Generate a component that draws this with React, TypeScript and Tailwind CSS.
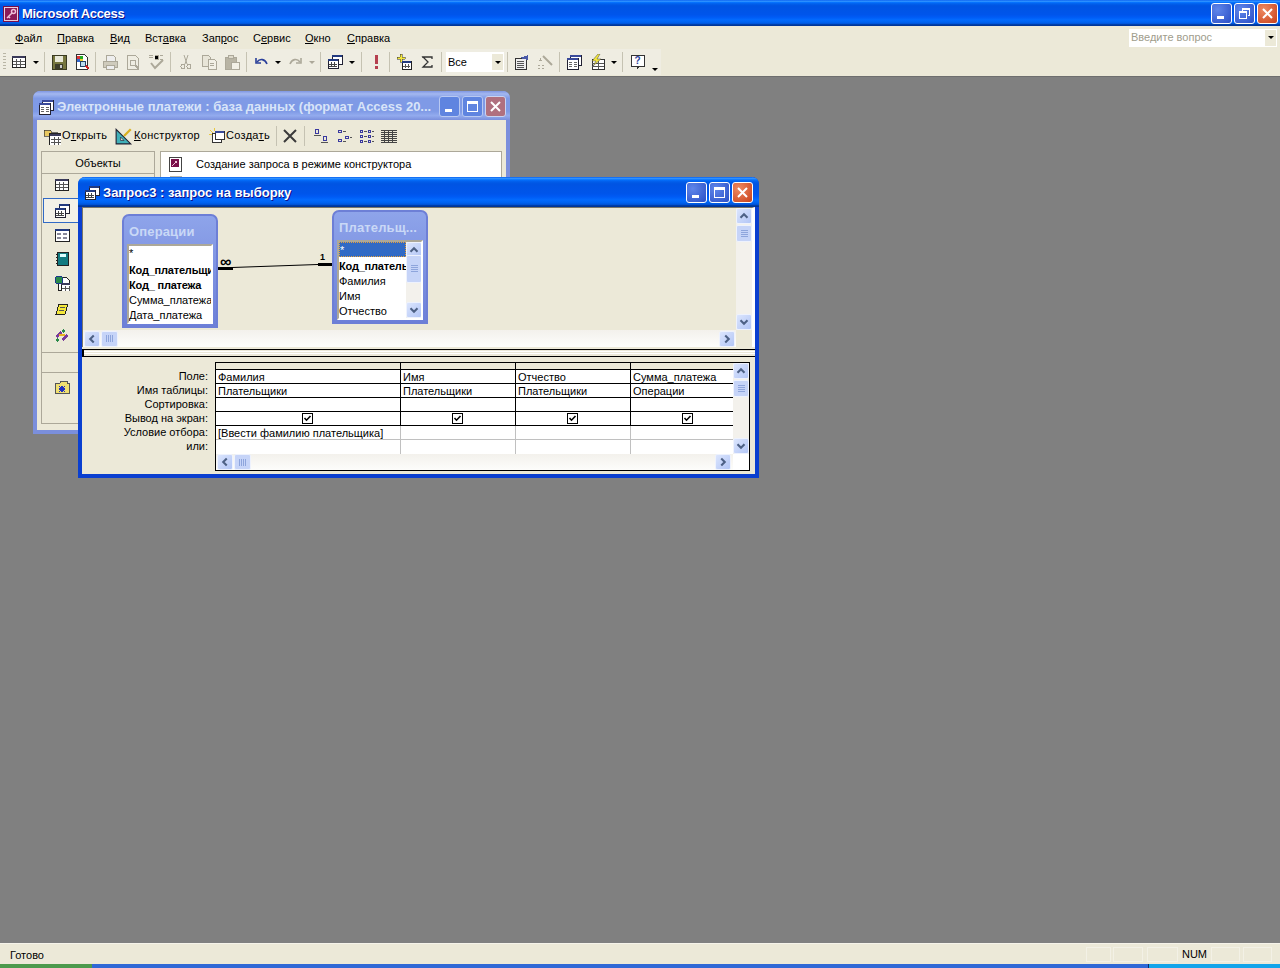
import type { ReactNode } from "react";

const LUNA =
  "bg-[linear-gradient(180deg,#0058ee_0%,#3593ff_4%,#288eff_6%,#127dff_8%,#036ffc_10%,#0262ee_14%,#0057e5_20%,#0054e3_24%,#0055eb_56%,#005bf5_66%,#026afe_76%,#0062ef_86%,#0052d6_92%,#0040ab_94%,#003092_100%)]";

const Ic = ({ children, size = 16 }: { children: ReactNode; size?: number }) => (
  <svg width={size} height={size} viewBox="0 0 16 16" shapeRendering="crispEdges" className="shrink-0">
    {children}
  </svg>
);

const GridIcon = ({ x = 1, y = 2, head = "#3a3a5a" }: { x?: number; y?: number; head?: string }) => (
  <g>
    <rect x={x} y={y} width="13" height="11" fill="#fff" stroke="#222" />
    <rect x={x} y={y} width="13" height="2" fill={head} />
    <path d={`M${x + 4} ${y + 3}v8M${x + 8} ${y + 3}v8M${x + 1} ${y + 5}h12M${x + 1} ${y + 8}h12`} stroke="#555" />
  </g>
);

const QueryIcon = () => (
  <Ic>
    <rect x="5" y="1" width="10" height="9" fill="#fff" stroke="#223" />
    <rect x="5" y="1" width="10" height="2" fill="#223a80" />
    <rect x="1" y="5" width="10" height="9" fill="#fff" stroke="#223" />
    <rect x="1" y="5" width="10" height="2" fill="#223a80" />
    <path d="M4 8v5M7 8v5M2 10h8M2 12h8" stroke="#444" />
  </Ic>
);

const icons: Record<string, ReactNode> = {
  table: <Ic><GridIcon /></Ic>,
  save: (
    <Ic>
      <rect x="1" y="1" width="14" height="14" fill="#76763e" stroke="#3a3a22" />
      <rect x="4" y="2" width="8" height="6" fill="#e8e8d8" />
      <rect x="4" y="10" width="8" height="5" fill="#3c3c2a" />
      <rect x="9" y="11" width="2" height="3" fill="#ccc" />
    </Ic>
  ),
  search: (
    <Ic>
      <path d="M2 0h8l3 3v12H2z" fill="#fff" stroke="#333" />
      <rect x="3" y="2" width="3" height="3" fill="#d33" />
      <rect x="6" y="2" width="3" height="3" fill="#2a2" />
      <rect x="3" y="5" width="3" height="3" fill="#36c" />
      <rect x="6" y="5" width="3" height="3" fill="#ec3" />
      <circle cx="9" cy="10" r="3" fill="#bde" stroke="#246" />
      <path d="M12 12l3 3" stroke="#c22" strokeWidth="2" />
    </Ic>
  ),
  print: (
    <Ic>
      <path d="M4 1h7l2 2v4H4z" fill="#eee" stroke="#aca899" />
      <path d="M1 7h14v6H1z" fill="#cfcbbc" stroke="#aca899" />
      <path d="M4 11h8v4H4z" fill="#eee" stroke="#aca899" />
    </Ic>
  ),
  preview: (
    <Ic>
      <path d="M2 1h8l3 3v11H2z" fill="none" stroke="#aca899" />
      <circle cx="8" cy="9" r="3" fill="none" stroke="#aca899" />
      <path d="M10 11l4 4" stroke="#aca899" strokeWidth="2" />
    </Ic>
  ),
  spell: (
    <Ic>
      <path d="M1 1h4M1 3h4M7 1h3v4H7M12 1h3M12 5h3" stroke="#aca899" />
      <path d="M3 9l4 5 8-8" fill="none" stroke="#aca899" strokeWidth="2" shapeRendering="auto" />
    </Ic>
  ),
  cut: (
    <Ic>
      <path d="M6 1l3 9M10 1l-3 9" stroke="#aca899" shapeRendering="auto" />
      <circle cx="5" cy="12.5" r="2" fill="none" stroke="#aca899" />
      <circle cx="11" cy="12.5" r="2" fill="none" stroke="#aca899" />
    </Ic>
  ),
  copy: (
    <Ic>
      <path d="M1 1h6l2 2v9H1z" fill="#e8e5d8" stroke="#aca899" />
      <path d="M7 5h6l2 2v8H7z" fill="#f2f0e6" stroke="#aca899" />
      <path d="M9 9h4M9 11h4" stroke="#aca899" />
    </Ic>
  ),
  paste: (
    <Ic>
      <rect x="1" y="3" width="11" height="12" fill="#b8b4a4" stroke="#aca899" />
      <rect x="4" y="1" width="5" height="3" fill="#ddd9ca" stroke="#aca899" />
      <rect x="7" y="8" width="8" height="7" fill="#f2f0e6" stroke="#aca899" />
    </Ic>
  ),
  undo: (
    <Ic>
      <path d="M2 4v5h5" fill="none" stroke="#2a3f9a" strokeWidth="1.6" shapeRendering="auto" />
      <path d="M3 8c3-4 8-3 10 2" fill="none" stroke="#2a3f9a" strokeWidth="1.6" shapeRendering="auto" />
    </Ic>
  ),
  redo: (
    <Ic>
      <path d="M14 4v5H9" fill="none" stroke="#aca899" strokeWidth="1.6" shapeRendering="auto" />
      <path d="M13 8C10 4 5 5 3 10" fill="none" stroke="#aca899" strokeWidth="1.6" shapeRendering="auto" />
    </Ic>
  ),
  query: <QueryIcon />,
  run: (
    <Ic>
      <path d="M7 1h3v9H7z" fill="#b5404f" />
      <rect x="7" y="12" width="3" height="3" fill="#b5404f" />
    </Ic>
  ),
  add: (
    <Ic>
      <path d="M4 0h2v3h3v2H6v3H4V5H1V3h3z" fill="#f5e83a" stroke="#333" strokeWidth="0.5" />
      <rect x="6" y="7" width="9" height="8" fill="#fff" stroke="#222" />
      <rect x="6" y="7" width="9" height="2" fill="#223a80" />
      <path d="M9 10v4M12 10v4M7 12h7" stroke="#555" />
    </Ic>
  ),
  sigma: (
    <Ic>
      <path d="M3 3h10v2M12 3H4l5 5-5 5h9v-2" fill="none" stroke="#333" strokeWidth="1.3" shapeRendering="auto" />
    </Ic>
  ),
  props: (
    <Ic>
      <rect x="1" y="4" width="11" height="11" fill="#eee" stroke="#333" />
      <path d="M3 7h7M3 9h7M3 11h7M3 13h7" stroke="#555" />
      <path d="M6 4l8-3v5z" fill="#4a5aa8" />
    </Ic>
  ),
  wizard: (
    <Ic>
      <path d="M6 2l9 9" stroke="#aca899" strokeWidth="2" shapeRendering="auto" />
      <path d="M2 6h3M3 4v3M1 11h2M5 11h2M1 14h2M5 14h2" stroke="#aca899" />
    </Ic>
  ),
  dbwin: (
    <Ic>
      <rect x="4" y="1" width="11" height="10" fill="#fff" stroke="#223" />
      <rect x="4" y="1" width="11" height="2" fill="#3a4a9a" />
      <rect x="1" y="4" width="11" height="11" fill="#fff" stroke="#223" />
      <rect x="1" y="4" width="11" height="2" fill="#3a4a9a" />
      <path d="M3 8h3M3 10h3M3 12h3M8 8h3M8 10h3M8 12h3" stroke="#666" />
    </Ic>
  ),
  newobj: (
    <Ic>
      <rect x="3" y="5" width="12" height="10" fill="#fff" stroke="#333" />
      <path d="M9 5v10M3 9h12M3 12h12" stroke="#555" />
      <path d="M9 0L3 7h4L4 12l8-7H8l3-5z" fill="#f5e83a" stroke="#444" strokeWidth="0.5" shapeRendering="auto" />
    </Ic>
  ),
  help: (
    <Ic>
      <path d="M1 1h13v11H9l-2 3v-3H1z" fill="#fff" stroke="#333" />
      <text x="7.5" y="10" textAnchor="middle" fontSize="10" fontWeight="700" fill="#2a3f9a" fontFamily="Liberation Sans">?</text>
    </Ic>
  ),
};

const Arrow = ({ off = false, w = "w-[12px]" }: { off?: boolean; w?: string }) => (
  <div className={`flex ${w} items-center justify-center`}>
    <div className={`h-0 w-0 border-x-[3px] border-t-[3px] border-x-transparent ${off ? "border-t-[#aca899]" : "border-t-black"}`} />
  </div>
);

const Sep = ({ w = "w-[5px]", h = "" }: { w?: string; h?: string }) => (
  <div className={`flex ${w} ${h} justify-center`}>
    <div className="my-[3px] w-px bg-[#c5c2b2]" />
  </div>
);

const Slot = ({ name }: { name: string }) => (
  <div className="flex w-[23px] items-center justify-center">{icons[name]}</div>
);

const Grip = () => (
  <div className="ml-[3px] mr-[1px] my-[4px] w-[3px] bg-[repeating-linear-gradient(180deg,#b8b5a5_0,#b8b5a5_1px,transparent_1px,transparent_3px)]" />
);

function WinBtn({ kind, dim = false }: { kind: "min" | "max" | "restore" | "close"; dim?: boolean }) {
  const bg =
    kind === "close"
      ? dim
        ? "bg-[#b0707f] border-[#c9d4f2]"
        : "bg-[radial-gradient(circle_at_30%_30%,#ee8a62,#c8401a)] border-white"
      : dim
        ? "bg-[#5f84e0] border-[#b9c9f2]"
        : "bg-[radial-gradient(circle_at_30%_30%,#5f86ea,#2b4fc6)] border-white";
  return (
    <div className={`flex h-[21px] w-[21px] items-center justify-center rounded-[3px] border ${bg}`}>
      <svg width="13" height="13" viewBox="0 0 13 13" shapeRendering="crispEdges">
        {kind === "min" && <rect x="2" y="9" width="7" height="3" fill="#fff" />}
        {kind === "max" && (
          <g>
            <rect x="1.5" y="1.5" width="10" height="10" fill="none" stroke="#fff" />
            <rect x="1" y="1" width="11" height="3" fill="#fff" />
          </g>
        )}
        {kind === "restore" && (
          <g fill="none" stroke="#fff">
            <path d="M4.5 3.5V1.5h7v7H9.5" />
            <rect x="1.5" y="4.5" width="7" height="7" />
            <path d="M1 5.5h8M4 2.5h8" />
          </g>
        )}
        {kind === "close" && (
          <path d="M2 2l9 9M11 2l-9 9" stroke="#fff" strokeWidth="2" shapeRendering="auto" />
        )}
      </svg>
    </div>
  );
}

function ScrollBtn({ dir }: { dir: "up" | "down" | "left" | "right" }) {
  const d = {
    up: "M4 10l4-4 4 4",
    down: "M4 6l4 4 4-4",
    left: "M10 4l-4 4 4 4",
    right: "M6 4l4 4-4 4",
  }[dir];
  return (
    <div className="flex h-[16px] w-[16px] shrink-0 items-center justify-center rounded-[2px] border border-[#eef2fd] bg-[linear-gradient(135deg,#dbe5fd,#b3c6f6)]">
      <svg width="14" height="14" viewBox="0 0 16 16">
        <path d={d} fill="none" stroke="#4d6185" strokeWidth="2.4" />
      </svg>
    </div>
  );
}

const Thumb = ({ horizontal = false, size = "" }: { horizontal?: boolean; size?: string }) => (
  <div className={`flex shrink-0 items-center justify-center rounded-[2px] border border-[#eef2fd] bg-[#c6d4f8] ${size}`}>
    <div
      className={
        horizontal
          ? "h-[7px] w-[8px] bg-[repeating-linear-gradient(90deg,#8ea5dc_0,#8ea5dc_1px,transparent_1px,transparent_2px)]"
          : "h-[8px] w-[7px] bg-[repeating-linear-gradient(180deg,#8ea5dc_0,#8ea5dc_1px,transparent_1px,transparent_2px)]"
      }
    />
  </div>
);

const FieldRow = ({ children, bold = false, sel = false, tall = false }: { children: string; bold?: boolean; sel?: boolean; tall?: boolean }) => (
  <div
    className={`h-[15px] overflow-hidden whitespace-nowrap leading-[15px] ${bold ? "font-bold tracking-[-0.2px]" : ""} ${tall ? "mb-[2px]" : ""} ${
      sel ? "border border-dotted border-[#e8a13a] bg-[#316ac5] leading-[13px] text-white" : ""
    }`}
  >
    {children}
  </div>
);

function FieldBox({ title, className, children }: { title: string; className: string; children: ReactNode }) {
  return (
    <div className={`absolute flex h-[114px] w-[96px] flex-col rounded-t-[7px] border-2 border-[#6d7fd6] bg-[linear-gradient(180deg,#8ea4ea,#6d80d8)] ${className}`}>
      <div className="h-[28px] overflow-hidden whitespace-nowrap pl-[5px] pt-[6px] text-[13px] font-bold tracking-[0.15px] text-[#c9d8f6]">
        {title}
      </div>
      {children}
    </div>
  );
}

const colRow = "grid grid-cols-[185px_115px_115px_115px] border-b border-black";

const rows = [
  { vals: ["Фамилия", "Имя", "Отчество", "Сумма_платежа"] },
  { vals: ["Плательщики", "Плательщики", "Плательщики", "Операции"] },
  { vals: ["", "", "", ""] },
];

const Check = () => (
  <div className="mr-[2px] flex h-[11px] w-[11px] items-center justify-center border border-black bg-white">
    <svg width="9" height="9" viewBox="0 0 9 9">
      <path d="M1.5 4l2 2.2L7.5 2" fill="none" stroke="#000" strokeWidth="1.6" />
    </svg>
  </div>
);

const objectIcons: { name: ReactNode; h: string; sel?: boolean }[] = [
  { name: icons.table, h: "h-[22px]" },
  { name: <QueryIcon />, h: "h-[25px] mt-[2px]", sel: true },
  {
    name: (
      <Ic>
        <rect x="1" y="2" width="14" height="12" fill="#fff" stroke="#222" />
        <rect x="1" y="2" width="14" height="2" fill="#223a80" />
        <path d="M3 6h4v2H3zM9 6h4v2H9zM3 10h4v2H3zM9 10h4v2H9z" fill="#889" />
      </Ic>
    ),
    h: "h-[23px]",
  },
  {
    name: (
      <Ic>
        <rect x="3" y="2" width="11" height="13" fill="#127a80" stroke="#222" />
        <rect x="6" y="4" width="6" height="3" fill="#dff" />
        <path d="M2 4h2M2 7h2M2 10h2M2 13h2" stroke="#222" />
      </Ic>
    ),
    h: "h-[24px]",
  },
  {
    name: (
      <Ic>
        <path d="M4 2h8l3 3v10H4z" fill="#fff" stroke="#222" />
        <circle cx="5" cy="5" r="4" fill="#2a8a4a" stroke="#1c3a8a" />
        <GridIcon x={7} y={8} />
      </Ic>
    ),
    h: "h-[26px]",
  },
  {
    name: (
      <Ic>
        <path d="M5 3h9l-3 10H2z" fill="#f5e83a" stroke="#222" />
        <path d="M6 6h5M5 9h5" stroke="#555" />
      </Ic>
    ),
    h: "h-[26px]",
  },
  {
    name: (
      <Ic>
        <path d="M1 9l5-5 2 2-5 5zM7 12l5-5 2 2-5 5z" fill="#7a3a9a" />
        <path d="M9 2l2 2-2 2-2-2zM3 11l2 2-2 2-2-2z" fill="#2a8a4a" />
        <path d="M5 7h6v2H5z" fill="#e8b020" />
      </Ic>
    ),
    h: "h-[26px]",
  },
];

export default function App() {
  return (
    <div className="flex h-[968px] w-[1280px] flex-col overflow-hidden bg-[#808080] font-['Liberation_Sans',sans-serif] text-[11px] text-black">
      {/* main title bar */}
      <div className={`flex h-[26px] shrink-0 items-center pl-[3px] pr-[2px] ${LUNA}`}>
        <svg width="16" height="16" viewBox="0 0 16 16" shapeRendering="crispEdges" className="mt-[1px]">
          <rect width="16" height="16" fill="#7a0f4a" />
          <rect x="1.5" y="1.5" width="13" height="13" fill="#8c1a58" stroke="#e8d0dc" />
          <circle cx="10.5" cy="5.5" r="2" fill="none" stroke="#f0c0d8" strokeWidth="1.5" shapeRendering="auto" />
          <path d="M9 7l-5 5M5 10l2 2" stroke="#f0c0d8" strokeWidth="1.5" shapeRendering="auto" />
        </svg>
        <span className="ml-[3px] pt-[1px] text-[13px] font-bold tracking-[-0.3px] text-white [text-shadow:1px_1px_#0f1089]">Microsoft Access</span>
        <div className="ml-auto flex gap-[2px]">
          <WinBtn kind="min" />
          <WinBtn kind="restore" />
          <WinBtn kind="close" />
        </div>
      </div>

      {/* menu */}
      <div className="flex h-[22px] shrink-0 items-center justify-between bg-[#ece9d8]">
        <div className="flex h-full items-center">
          <Grip />
          <div className="ml-[8px] flex pt-[2px]">
            <span className="w-[42px]"><u>Ф</u>айл</span>
            <span className="w-[53px]"><u>П</u>равка</span>
            <span className="w-[35px]"><u>В</u>ид</span>
            <span className="w-[57px]">Вст<u>а</u>вка</span>
            <span className="w-[51px]">Зап<u>р</u>ос</span>
            <span className="w-[52px]">С<u>е</u>рвис</span>
            <span className="w-[42px]"><u>О</u>кно</span>
            <span><u>С</u>правка</span>
          </div>
        </div>
        <div className="mr-[3px] mt-[1px] flex h-[18px] w-[148px] items-center justify-between bg-white pl-[2px] pr-[1px] text-[#a09d8c]">
          Введите вопрос
          <div className="flex h-[16px] w-[11px] items-center justify-center bg-[#ece9d8]">
            <div className="h-0 w-0 border-x-[3px] border-t-[3px] border-x-transparent border-t-black" />
          </div>
        </div>
      </div>

      {/* toolbar */}
      <div className="flex h-[28px] shrink-0 bg-[#ece9d8] pb-[1px] pt-[1px]">
        <div className="flex w-[661px] bg-[#efede2]">
          <Grip />
          <Slot name="table" />
          <Arrow />
          <Sep />
          <Slot name="save" />
          <Slot name="search" />
          <Sep />
          <Slot name="print" />
          <Slot name="preview" />
          <Slot name="spell" />
          <Sep w="w-[7px]" />
          <Slot name="cut" />
          <Slot name="copy" />
          <Slot name="paste" />
          <Sep w="w-[7px]" />
          <Slot name="undo" />
          <Arrow w="w-[10px]" />
          <Slot name="redo" />
          <Arrow off />
          <Sep />
          <Slot name="query" />
          <Arrow />
          <Sep w="w-[6px]" />
          <Slot name="run" />
          <Sep />
          <Slot name="add" />
          <Slot name="sigma" />
          <Sep w="w-[6px]" />
          <div className="my-[3px] ml-[2px] flex w-[58px] items-center justify-between bg-white pl-[2px] pr-[1px]">
            Все
            <div className="flex h-[16px] w-[11px] items-center justify-center bg-[#ece9d8]">
              <div className="h-0 w-0 border-x-[3px] border-t-[3px] border-x-transparent border-t-black" />
            </div>
          </div>
          <Sep w="w-[6px]" />
          <Slot name="props" />
          <Slot name="wizard" />
          <Sep w="w-[6px]" />
          <Slot name="dbwin" />
          <Slot name="newobj" />
          <Arrow />
          <Sep />
          <div className="ml-[1px] flex">
            <Slot name="help" />
            <div className="flex w-[12px] items-end justify-center pb-[4px]">
              <div className="h-0 w-0 border-x-[3px] border-t-[3px] border-x-transparent border-t-black" />
            </div>
          </div>
        </div>
      </div>

      {/* MDI area */}
      <div className="relative flex-1 border-t border-[#6e6e6e] bg-[#808080]">
        {/* database window (inactive) */}
        <div className="absolute left-[33px] top-[14px] flex h-[343px] w-[477px] flex-col rounded-t-[7px] border-x-4 border-b-4 border-[#7b8fdc] bg-[#ece9d8]">
          <div className="-mx-[4px] flex h-[29px] shrink-0 items-center rounded-t-[7px] bg-[linear-gradient(180deg,#7f96e2_0%,#a4b8f0_10%,#7f9ae6_25%,#7f9ae6_70%,#93abee_85%,#7a8fdc_100%)] pl-[5px] pr-[4px] pt-[2px]">
            {icons.dbwin}
            <span className="ml-[3px] w-[375px] overflow-hidden whitespace-nowrap text-[13px] font-bold text-[#d8e4f8]">
              Электронные платежи : база данных (формат Access 20...
            </span>
            <div className="ml-auto -mt-[1px] flex gap-[2px]">
              <WinBtn kind="min" dim />
              <WinBtn kind="max" dim />
              <WinBtn kind="close" dim />
            </div>
          </div>
          <div className="flex h-[31px] shrink-0 items-center pl-[6px] tracking-[0.3px]">
            <svg width="18" height="18" viewBox="0 0 16 16" shapeRendering="crispEdges" className="shrink-0">
              <path d="M1 3h6l1 2h5v3H1z" fill="#e8c860" stroke="#333" strokeWidth="0.6" />
              <GridIcon x={6} y={6} />
            </svg>
            <span className="ml-[1px] w-[53px]">О<u>т</u>крыть</span>
            <svg width="18" height="18" viewBox="0 0 16 16" className="shrink-0">
              <path d="M1 2v13h13z" fill="#40b0b8" stroke="#223" />
              <path d="M5 9v3h3z" fill="#ece9d8" stroke="#223" strokeWidth="0.6" />
              <path d="M8 8l6-6" stroke="#d8b020" strokeWidth="2" />
            </svg>
            <span className="ml-[1px] w-[75px]"><u>К</u>онструктор</span>
            <svg width="16" height="16" viewBox="0 0 16 16" shapeRendering="crispEdges" className="shrink-0">
              <path d="M1 2l3 3M5 0v3M0 6h3" stroke="#e8c840" />
              <rect x="3" y="5" width="9" height="9" fill="#fff" stroke="#333" />
              <rect x="6" y="3" width="9" height="8" fill="#fff" stroke="#333" />
              <rect x="6" y="3" width="9" height="2" fill="#3a4a9a" />
            </svg>
            <span className="ml-[1px] w-[48px]">Созда<u>т</u>ь</span>
            <Sep h="h-[26px]" />
            <svg width="14" height="14" viewBox="0 0 14 14" className="ml-[4px] shrink-0">
              <path d="M1 1l12 12M13 1L1 13" stroke="#3a3a3a" strokeWidth="2" />
            </svg>
            <Sep w="w-[15px]" h="h-[26px]" />
            <svg width="16" height="16" viewBox="0 0 16 16" shapeRendering="crispEdges" className="ml-[1px]">
              <path d="M2.5 1.5h3v4h-3zM10.5 8.5h3v4h-3z" fill="none" stroke="#3a3aa0" />
              <path d="M1 7h7M8 14h7" stroke="#555" />
            </svg>
            <svg width="16" height="16" viewBox="0 0 16 16" shapeRendering="crispEdges" className="ml-[8px]">
              <path d="M1.5 2.5h3v2h-3zM8.5 8.5h3v2h-3zM1.5 13.5h3v-2h-3z" fill="none" stroke="#3a3aa0" />
              <path d="M6 3h3M13 9h2M6 13h3" stroke="#555" />
            </svg>
            <svg width="16" height="16" viewBox="0 0 16 16" shapeRendering="crispEdges" className="ml-[6px]">
              <path d="M1.5 2.5h2v2h-2zM1.5 7.5h2v2h-2zM1.5 12.5h2v2h-2zM9.5 2.5h2v2h-2zM9.5 7.5h2v2h-2zM9.5 12.5h2v2h-2z" fill="none" stroke="#3a3aa0" />
              <path d="M5 3h3M5 8h3M5 13h3M13 3h2M13 8h2M13 13h2" stroke="#555" />
            </svg>
            <svg width="16" height="16" viewBox="0 0 16 16" shapeRendering="crispEdges" className="ml-[6px]">
              <path d="M0 2h16M0 4h16M0 6h16M0 8h16M0 10h16M0 12h16M0 14h16M3 2v12M7 2v12M11 2v12" stroke="#444" />
            </svg>
          </div>
          <div className="flex flex-1 gap-[5px] pl-[4px] pr-[4px]">
            <div className="flex h-[273px] w-[114px] flex-col border border-[#aca899]">
              <div className="flex h-[22px] items-center justify-center border-b border-[#aca899] pt-[2px]">Объекты</div>
              {objectIcons.map((o, i) => (
                <div
                  key={i}
                  className={`flex items-center ${o.h} ${o.sel ? "ml-[1px] border border-[#316ac5] bg-[#f3f1e8] pl-[10px]" : "pl-[12px]"}`}
                >
                  {o.name}
                </div>
              ))}
              <div className="mt-[4px] h-px bg-[#aca899]" />
              <div className="mt-[19px] h-px bg-[#aca899]" />
              <div className="flex h-[28px] items-center pl-[12px]">
                <Ic>
                  <path d="M1 4h5l1-2h6v2h2v10H1z" fill="#f0e070" stroke="#555" />
                  <path d="M8 6l1 2 2-1-1 2 2 1-2 1 1 2-2-1-1 2-1-2-2 1 1-2-2-1 2-1-1-2 2 1z" fill="#2030c0" />
                </Ic>
              </div>
            </div>
            <div className="h-[273px] w-[342px] border border-[#aca899] bg-white">
              <div className="flex h-[24px] items-center pl-[7px]">
                <Ic>
                  <rect x="1" y="1" width="12" height="14" fill="#fff" stroke="#444" />
                  <rect x="3" y="3" width="8" height="8" fill="#7a0f4a" />
                  <circle cx="8" cy="6" r="1.5" fill="#f0c0d8" />
                  <path d="M7 7l-3 3" stroke="#f0c0d8" />
                </Ic>
                <span className="ml-[12px]">Создание запроса в режиме конструктора</span>
              </div>
              <div className="ml-[9px] h-[3px] w-[12px] bg-[#b8b4a4]" />
            </div>
          </div>
        </div>

        {/* query window (active) */}
        <div className="absolute left-[78px] top-[100px] flex h-[301px] w-[681px] flex-col rounded-t-[7px] border-x-4 border-b-4 border-[#0a3fd0] bg-[#ece9d8]">
          <div className={`-mx-[4px] flex h-[30px] shrink-0 items-center rounded-t-[7px] pl-[6px] pr-[6px] pt-[1px] ${LUNA}`}>
            <QueryIcon />
            <span className="ml-[3px] text-[13px] font-bold text-white [text-shadow:1px_1px_#0f1089]">
              Запрос3 : запрос на выборку
            </span>
            <div className="ml-auto flex gap-[2px]">
              <WinBtn kind="min" />
              <WinBtn kind="max" />
              <WinBtn kind="close" />
            </div>
          </div>

          {/* tables pane */}
          <div className="flex h-[140px] shrink-0 flex-col border-l border-r-[3px] border-t border-[#7a7768] border-r-white">
            <div className="flex h-[123px]">
              <div className="relative flex-1 overflow-hidden">
                <FieldBox title="Операции" className="left-[39px] top-[6px]">
                  <div className="mx-[3px] mb-[2px] h-[80px] overflow-hidden border-2 border-[#aca899] border-b-white border-r-white bg-white">
                    <FieldRow tall>*</FieldRow>
                    <FieldRow bold>Код_плательщи</FieldRow>
                    <FieldRow bold>Код_ платежа</FieldRow>
                    <FieldRow>Сумма_платежа</FieldRow>
                    <FieldRow>Дата_платежа</FieldRow>
                  </div>
                </FieldBox>
                <FieldBox title="Плательщ..." className="left-[249px] top-[2px]">
                  <div className="mx-[3px] mb-[2px] flex h-[80px] overflow-hidden border-2 border-[#aca899] border-b-white border-r-white bg-white">
                    <div className="w-[67px] shrink-0">
                      <FieldRow sel tall>*</FieldRow>
                      <FieldRow bold>Код_плательщика</FieldRow>
                      <FieldRow>Фамилия</FieldRow>
                      <FieldRow>Имя</FieldRow>
                      <FieldRow>Отчество</FieldRow>
                    </div>
                    <div className="flex w-[16px] shrink-0 flex-col justify-between bg-[#f3f1ec]">
                      <ScrollBtn dir="up" />
                      <Thumb size="h-[28px] w-[16px] -mt-[3px] mb-auto" />
                      <ScrollBtn dir="down" />
                    </div>
                  </div>
                </FieldBox>
                <svg width="654" height="123" className="absolute left-0 top-0">
                  <path d="M135 60L249 56" stroke="#000" strokeWidth="1" />
                  <rect x="135" y="59" width="15" height="3" fill="#000" />
                  <rect x="235" y="55" width="14" height="3" fill="#000" />
                </svg>
                <span className="absolute left-[137px] top-[46px] text-[16px] font-bold leading-[16px]">∞</span>
                <span className="absolute left-[237px] top-[44px] text-[9px] font-bold leading-[10px]">1</span>
              </div>
              <div className="flex w-[16px] flex-col bg-[#f3f1ec]">
                <ScrollBtn dir="up" />
                <Thumb size="h-[17px] w-[16px] mt-[1px]" />
                <div className="flex-1" />
                <ScrollBtn dir="down" />
              </div>
            </div>
            <div className="flex h-[17px]">
              <div className="flex flex-1 items-center bg-[linear-gradient(180deg,#f3f1ec,#fdfdfb)] pl-[1px] pr-[1px]">
                <ScrollBtn dir="left" />
                <Thumb horizontal size="h-[16px] w-[17px] ml-[1px]" />
                <div className="flex-1" />
                <ScrollBtn dir="right" />
              </div>
              <div className="w-[16px] bg-[#ece9d8]" />
            </div>
          </div>

          {/* splitter */}
          <div className="mt-[2px] h-[8px] shrink-0 border-y border-l-2 border-black bg-[#ece9d8]">
            <div className="mt-[1px] h-[3px] border-y border-[#ffffff]" />
          </div>

          {/* design grid */}
          <div className="flex flex-1 pt-[5px]">
            <div className="w-[129px] shrink-0 pr-[3px] pt-[7px] text-right leading-[14px]">
              <div>Поле:</div>
              <div>Имя таблицы:</div>
              <div>Сортировка:</div>
              <div>Вывод на экран:</div>
              <div>Условие отбора:</div>
              <div>или:</div>
            </div>
            <div className="ml-[4px] flex h-[109px] w-[535px] border border-black bg-white">
              <div className="flex w-[517px] flex-col overflow-hidden">
                <div className={`${colRow} h-[7px] shrink-0 bg-[#ece9d8]`}>
                  <div className="border-r border-black" />
                  <div className="border-r border-black" />
                  <div className="border-r border-black" />
                  <div />
                </div>
                {rows.map((r, i) => (
                  <div key={i} className={`${colRow} h-[14px] shrink-0 leading-[14px]`}>
                    {r.vals.map((v, j) => (
                      <div key={j} className={`whitespace-nowrap pl-[2px] ${j < 3 ? "border-r border-black" : ""}`}>
                        {v}
                      </div>
                    ))}
                  </div>
                ))}
                <div className={`${colRow} h-[14px] shrink-0`}>
                  {[0, 1, 2, 3].map((j) => (
                    <div key={j} className={`flex items-center justify-center ${j < 3 ? "border-r border-black" : ""}`}>
                      <Check />
                    </div>
                  ))}
                </div>
                <div className="grid h-[14px] shrink-0 grid-cols-[185px_115px_115px_115px] border-b border-[#c0c0c0] leading-[14px]">
                  <div className="whitespace-nowrap border-r border-[#c0c0c0] pl-[2px]">[Ввести фамилию плательщика]</div>
                  <div className="border-r border-[#c0c0c0]" />
                  <div className="border-r border-[#c0c0c0]" />
                  <div />
                </div>
                <div className="grid h-[14px] shrink-0 grid-cols-[185px_115px_115px_115px]">
                  <div className="border-r border-[#c0c0c0]" />
                  <div className="border-r border-[#c0c0c0]" />
                  <div className="border-r border-[#c0c0c0]" />
                  <div />
                </div>
                <div className="flex flex-1 items-center bg-[linear-gradient(180deg,#f3f1ec,#fdfdfb)] pl-[1px] pr-[2px]">
                  <ScrollBtn dir="left" />
                  <Thumb horizontal size="h-[16px] w-[17px] ml-[1px]" />
                  <div className="flex-1" />
                  <ScrollBtn dir="right" />
                </div>
              </div>
              <div className="flex h-[91px] w-[16px] flex-col bg-[#f3f1ec]">
                <ScrollBtn dir="up" />
                <Thumb size="h-[17px] w-[16px] mt-[1px]" />
                <div className="flex-1" />
                <ScrollBtn dir="down" />
              </div>
            </div>
          </div>
        </div>
      </div>

      {/* status bar */}
      <div className="flex h-[21px] shrink-0 items-center border-t border-[#f5f3ea] bg-[#ece9d8]">
        <span className="ml-[10px] pt-[2px]">Готово</span>
        <div className="ml-auto mr-[8px] flex h-[15px] pt-0">
          <div className="mr-[2px] w-[25px] border border-[#f3f1e6]" />
          <div className="mr-[4px] w-[30px] border border-[#f3f1e6]" />
          <div className="w-[31px] border border-[#f3f1e6]" />
          <div className="flex w-[33px] items-center justify-center pt-[1px]">NUM</div>
          <div className="mr-[3px] w-[29px] border border-[#f3f1e6]" />
          <div className="w-[29px] border border-[#f3f1e6]" />
        </div>
      </div>
      <div className="flex h-[4px] shrink-0">
        <div className="w-[92px] bg-[#4c9a4c]" />
        <div className="w-[1056px] bg-[#2f68d6]" />
        <div className="flex-1 border-l border-[#0a2a6a] bg-[#12a4ea]" />
      </div>
    </div>
  );
}
